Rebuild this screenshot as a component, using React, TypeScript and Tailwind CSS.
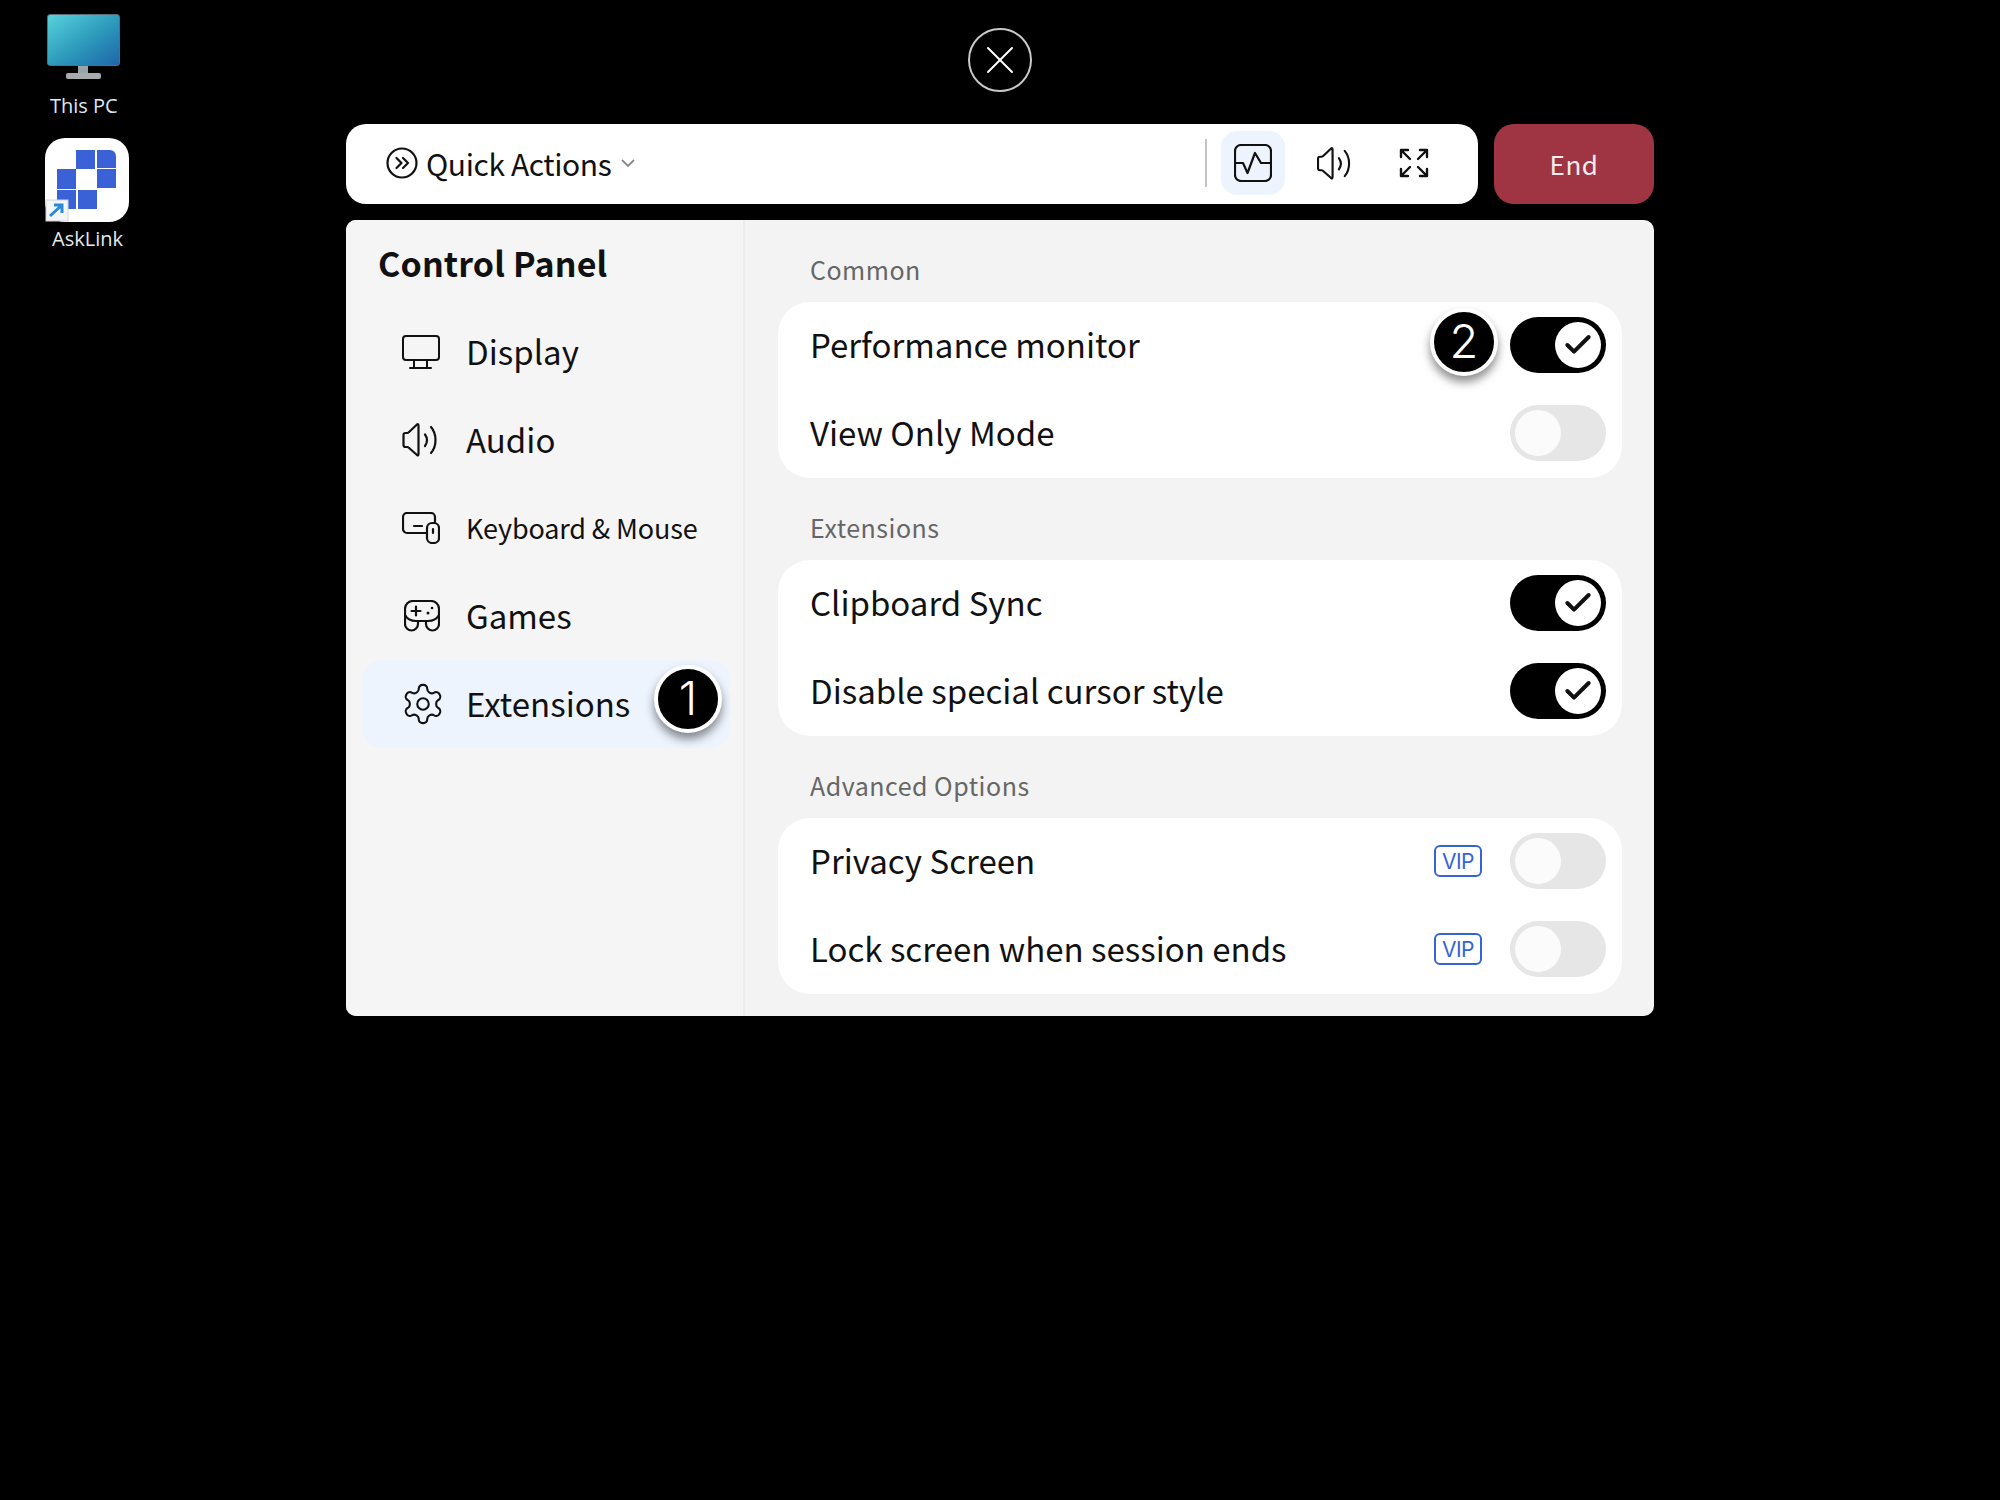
import React from 'react';
import { X, Check } from 'lucide-react';

const FONT = "font-['Noto_Sans_CJK_SC','Noto_Sans',sans-serif]";

const IconPulse = () => (
  <svg width="38" height="38" viewBox="-1 -1 38 38" fill="none" stroke="#111" strokeWidth="2.200" strokeLinecap="round" strokeLinejoin="round">
    <rect x="0" y="0" width="36" height="36" rx="6" />
    <path d="M0 18H8L12.500 28 20 8l6 10h10" />
  </svg>
);

const IconSound = ({ w = 36, h = 33 }: { w?: number; h?: number }) => (
  <svg width={w} height={h} viewBox="-1 -1 37 34" fill="none" stroke="#111" strokeWidth="2.200" strokeLinecap="round" strokeLinejoin="round">
    <path d="M13.500 .5 L5 8.500 Q4.500 9 3.500 9 H2 Q0 9 0 11 V21 Q0 23 2 23 H3.500 Q4.500 23 5 23.500 L13.500 31 Q15 32 15 30 V2 Q15 -.500 13.500 .5Z" />
    <path d="M21.500 10.500c2.500 3.500 2.500 8 0 11.500" />
    <path d="M27.500 3c6 7 6 19 0 26" />
  </svg>
);

const IconExpand = () => (
  <svg width="30" height="30" viewBox="0 0 30 30" fill="none" stroke="#111" strokeWidth="2.400" strokeLinecap="round" strokeLinejoin="round">
    <path d="M2 9V2h7M2 2l9 9M21 2h7v7M28 2l-9 9M2 21v7h7M2 28l9-9M28 21v7h-7M28 28l-9-9" />
  </svg>
);

const IconMonitor = () => (
  <svg width="38" height="34" viewBox="0 0 38 34" fill="none" stroke="#111" strokeWidth="2" strokeLinejoin="round" strokeLinecap="round">
    <rect x="1" y="1" width="36" height="24" rx="3" />
    <path d="M12 25v8M25 25v8M8 33h21" />
  </svg>
);

const IconKeyboardMouse = () => (
  <svg width="38" height="32" viewBox="0 0 38 32" fill="none" stroke="#111" strokeWidth="2.200" strokeLinecap="round" strokeLinejoin="round">
    <path d="M24 21H5a4 4 0 0 1-4-4V5a4 4 0 0 1 4-4h24a4 4 0 0 1 4 4v5" />
    <path d="M12 14h8" />
    <rect x="25" y="11" width="12" height="20" rx="5" />
    <path d="M31 17v4" />
  </svg>
);

const IconGamepad = () => (
  <svg width="36" height="32" viewBox="0 0 36 32" fill="none" stroke="#111" strokeWidth="2.200" strokeLinecap="round" strokeLinejoin="round">
    <path d="M9 1h18a8 8 0 0 1 8 8v15a6.500 6.500 0 0 1-13 0v-3H14v3a6.500 6.500 0 0 1-13 0V9a8 8 0 0 1 8-8Z" />
    <path d="M1 15c2 4 6 6 11 6h12c5 0 9-2 11-6" />
    <path d="M12 6.500v9M7.500 11h9" />
    <circle cx="28" cy="8" r="1.300" fill="#111" stroke="none" />
    <circle cx="24" cy="13" r="1.500" fill="#111" stroke="none" />
  </svg>
);

const IconGear = () => (
  <svg width="46" height="46" viewBox="0 0 24 24" fill="none" stroke="#111" strokeWidth="1.100" strokeLinecap="round" strokeLinejoin="round">
    <path d="M12.220 2h-.440a2 2 0 0 0-2 2v.180a2 2 0 0 1-1 1.730l-.430.250a2 2 0 0 1-2 0l-.150-.080a2 2 0 0 0-2.730.730l-.220.380a2 2 0 0 0 .730 2.730l.150.100a2 2 0 0 1 1 1.720v.510a2 2 0 0 1-1 1.740l-.150.090a2 2 0 0 0-.730 2.730l.220.380a2 2 0 0 0 2.730.730l.150-.080a2 2 0 0 1 2 0l.430.250a2 2 0 0 1 1 1.730V20a2 2 0 0 0 2 2h.440a2 2 0 0 0 2-2v-.180a2 2 0 0 1 1-1.730l.430-.250a2 2 0 0 1 2 0l.150.080a2 2 0 0 0 2.730-.730l.220-.390a2 2 0 0 0-.730-2.730l-.150-.080a2 2 0 0 1-1-1.740v-.500a2 2 0 0 1 1-1.740l.150-.090a2 2 0 0 0 .730-2.730l-.220-.380a2 2 0 0 0-2.730-.730l-.150.080a2 2 0 0 1-2 0l-.430-.250a2 2 0 0 1-1-1.730V4a2 2 0 0 0-2-2z" />
    <circle cx="12" cy="12" r="3" />
  </svg>
);

const Toggle = ({ on }: { on?: boolean }) =>
  on ? (
    <div className="flex h-[56px] w-[96px] shrink-0 items-center justify-end rounded-full bg-black p-[5px]">
      <div className="flex h-[46px] w-[46px] items-center justify-center rounded-full bg-white">
        <Check size={32} strokeWidth={3} color="#111" />
      </div>
    </div>
  ) : (
    <div className="flex h-[56px] w-[96px] shrink-0 items-center rounded-full bg-[#e6e6e6] p-[5px]">
      <div className="h-[46px] w-[46px] rounded-full bg-[#fbfbfb]" />
    </div>
  );

const Step = ({ n, className }: { n: string; className: string }) => (
  <div className={`absolute flex h-[68px] w-[68px] items-center justify-center rounded-full border-[4px] border-white bg-black pb-[3px] font-['Inter',sans-serif] text-[47px] font-light leading-none text-white shadow-[0_6px_10px_rgba(0,0,0,0.45)] ${className}`}>
    {n}
  </div>
);

const Vip = () => (
  <span className="mr-[28px] flex h-[32px] w-[48px] items-center justify-center rounded-[6px] border-2 border-[#3563d8] font-['Inter',sans-serif] text-[21px] leading-none tracking-[-0.5px] text-[#3563d8]">
    VIP
  </span>
);

const Row = ({ label, on, vip, children }: { label: string; on?: boolean; vip?: boolean; children?: React.ReactNode }) => (
  <div className="relative flex h-[88px] items-center justify-between pb-[2px] pl-[32px] pr-[16px]">
    <span className="text-[33px] text-[#111]">{label}</span>
    <div className="flex items-center">
      {vip && <Vip />}
      <Toggle on={on} />
    </div>
    {children}
  </div>
);

const Section = ({ title, children }: { title: string; children: React.ReactNode }) => (
  <div>
    <div className="mb-[12px] flex h-[40px] items-center pb-[1px] pl-[32px] text-[25px] tracking-[0.5px] text-[#666]">{title}</div>
    <div className="rounded-[32px] bg-white">{children}</div>
  </div>
);

const NavItem = ({ icon, label, active, small, children }: { icon: React.ReactNode; label: string; active?: boolean; small?: boolean; children?: React.ReactNode }) => (
  <div className={`relative flex h-[88px] items-center rounded-[20px] ${active ? 'bg-[#edf4fe]' : ''}`}>
    <div className="flex w-[104px] items-center pl-[40px]">{icon}</div>
    <span className={`${small ? 'text-[27px] tracking-[-0.15px]' : 'text-[33px]'} text-[#111]`}>{label}</span>
    {children}
  </div>
);

const DesktopIcons = () => (
  <>
    <div className="absolute left-[47px] top-[14px] h-[52px] w-[73px] rounded-[3px] border border-[#5a6b78] bg-gradient-to-br from-[#58d3dd] via-[#2f9dbd] to-[#1f66a8]" />
    <div className="absolute left-[78px] top-[66px] h-[8px] w-[10px] bg-[#9aa3a8]" />
    <div className="absolute left-[66px] top-[73px] h-[6px] w-[35px] rounded-[2px] bg-[#a6abae]" />
    <div className="absolute left-[50px] top-[92px] font-['Open_Sans',sans-serif] text-[20px] leading-[28px] text-[#dfe8f2]">This PC</div>
    <svg className="absolute left-[45px] top-[138px]" width="84" height="84" viewBox="0 0 84 84">
      <rect width="84" height="84" rx="20" fill="#fff" />
      <path d="M31 12h19v19H31zM12 31h19v20H12zM52 31h19v19H52zM12 52h19v19H12zM33 52h19v19H33z" fill="#3a62d6" />
      <path d="M52 12h13a6 6 0 0 1 6 6v12H52z" fill="#3a62d6" />
      <rect x="1" y="62" width="22" height="21" fill="#f4f6f8" stroke="#cfd3d8" />
      <path d="M5 78 L17 67M9 67h8v8" fill="none" stroke="#2a8ad8" strokeWidth="3" />
    </svg>
    <div className="absolute left-[52px] top-[225px] font-['Open_Sans',sans-serif] text-[20px] leading-[28px] text-[#e5e9ee]">AskLink</div>
  </>
);

export default function App() {
  return (
    <div className={`relative h-[1500px] w-full overflow-hidden bg-black ${FONT}`}>
      <DesktopIcons />
      <div className="ml-[346px] flex w-[1308px] flex-col pt-[28px]">
        <button className="mx-auto mb-[32px] flex h-[64px] w-[64px] items-center justify-center rounded-full border-2 border-[#c8c8c8] bg-black">
          <X size={48} strokeWidth={1} color="#fff" />
        </button>

        <div className="flex h-[80px] gap-[16px]">
          <div className="flex w-[1132px] items-center rounded-[20px] bg-white pb-[2px] pl-[40px]">
            <svg width="32" height="32" viewBox="0 0 32 32" fill="none" stroke="#111" strokeWidth="2.200" strokeLinecap="round" strokeLinejoin="round">
              <circle cx="16" cy="16" r="14.500" />
              <path d="M10.500 11l5 5-5 5M17 11l5 5-5 5" />
            </svg>
            <span className="ml-[8px] text-[30px] tracking-[-0.4px] text-[#111]">Quick Actions</span>
            <svg className="ml-[10px]" width="14" height="9" viewBox="0 0 14 9" fill="none" stroke="#888" strokeWidth="1.800">
              <path d="M1 1l6 6 6-6" />
            </svg>
            <div className="ml-auto mr-[14px] h-[48px] w-[2px] bg-[#c4c4c4]" />
            <div className="flex h-[64px] w-[64px] items-center justify-center rounded-[16px] bg-[#edf4fe]">
              <IconPulse />
            </div>
            <div className="ml-[32px] flex w-[36px] justify-center"><IconSound /></div>
            <div className="ml-[46px] mr-[49px] flex w-[30px] justify-center"><IconExpand /></div>
          </div>
          <button className="flex w-[160px] items-center justify-center rounded-[20px] bg-[#9f3542] pb-[2px] text-[26px] tracking-[0.5px] text-[#f7ecee]">
            End
          </button>
        </div>

        <div className="mt-[16px] flex h-[796px] overflow-hidden rounded-[10px] bg-[#f3f3f3]">
          <div className="w-[399px] shrink-0 border-r-2 border-[#ececec] bg-[#f5f5f5] pl-[16px] pr-[13px]">
            <div className="pl-[16px] pt-[19px] text-[34px] font-bold leading-[48px] tracking-[0.15px] text-[#111]">Control Panel</div>
            <div className="mt-[21px]">
              <NavItem icon={<IconMonitor />} label="Display" />
              <NavItem icon={<IconSound w={38} h={34} />} label="Audio" />
              <NavItem icon={<IconKeyboardMouse />} label="Keyboard & Mouse" small />
              <NavItem icon={<div className="ml-[2px]"><IconGamepad /></div>} label="Games" />
              <NavItem icon={<div className="-ml-[2px]"><IconGear /></div>} label="Extensions" active>
                <Step n="1" className="right-[8px] top-[5px]" />
              </NavItem>
            </div>
          </div>
          <div className="flex flex-1 flex-col gap-[30px] pl-[33px] pr-[32px] pt-[30px]">
            <Section title="Common">
              <Row label="Performance monitor" on>
                <Step n="2" className="right-[124px] top-[6px]" />
              </Row>
              <Row label="View Only Mode" />
            </Section>
            <Section title="Extensions">
              <Row label="Clipboard Sync" on />
              <Row label="Disable special cursor style" on />
            </Section>
            <Section title="Advanced Options">
              <Row label="Privacy Screen" vip />
              <Row label="Lock screen when session ends" vip />
            </Section>
          </div>
        </div>
      </div>
    </div>
  );
}
